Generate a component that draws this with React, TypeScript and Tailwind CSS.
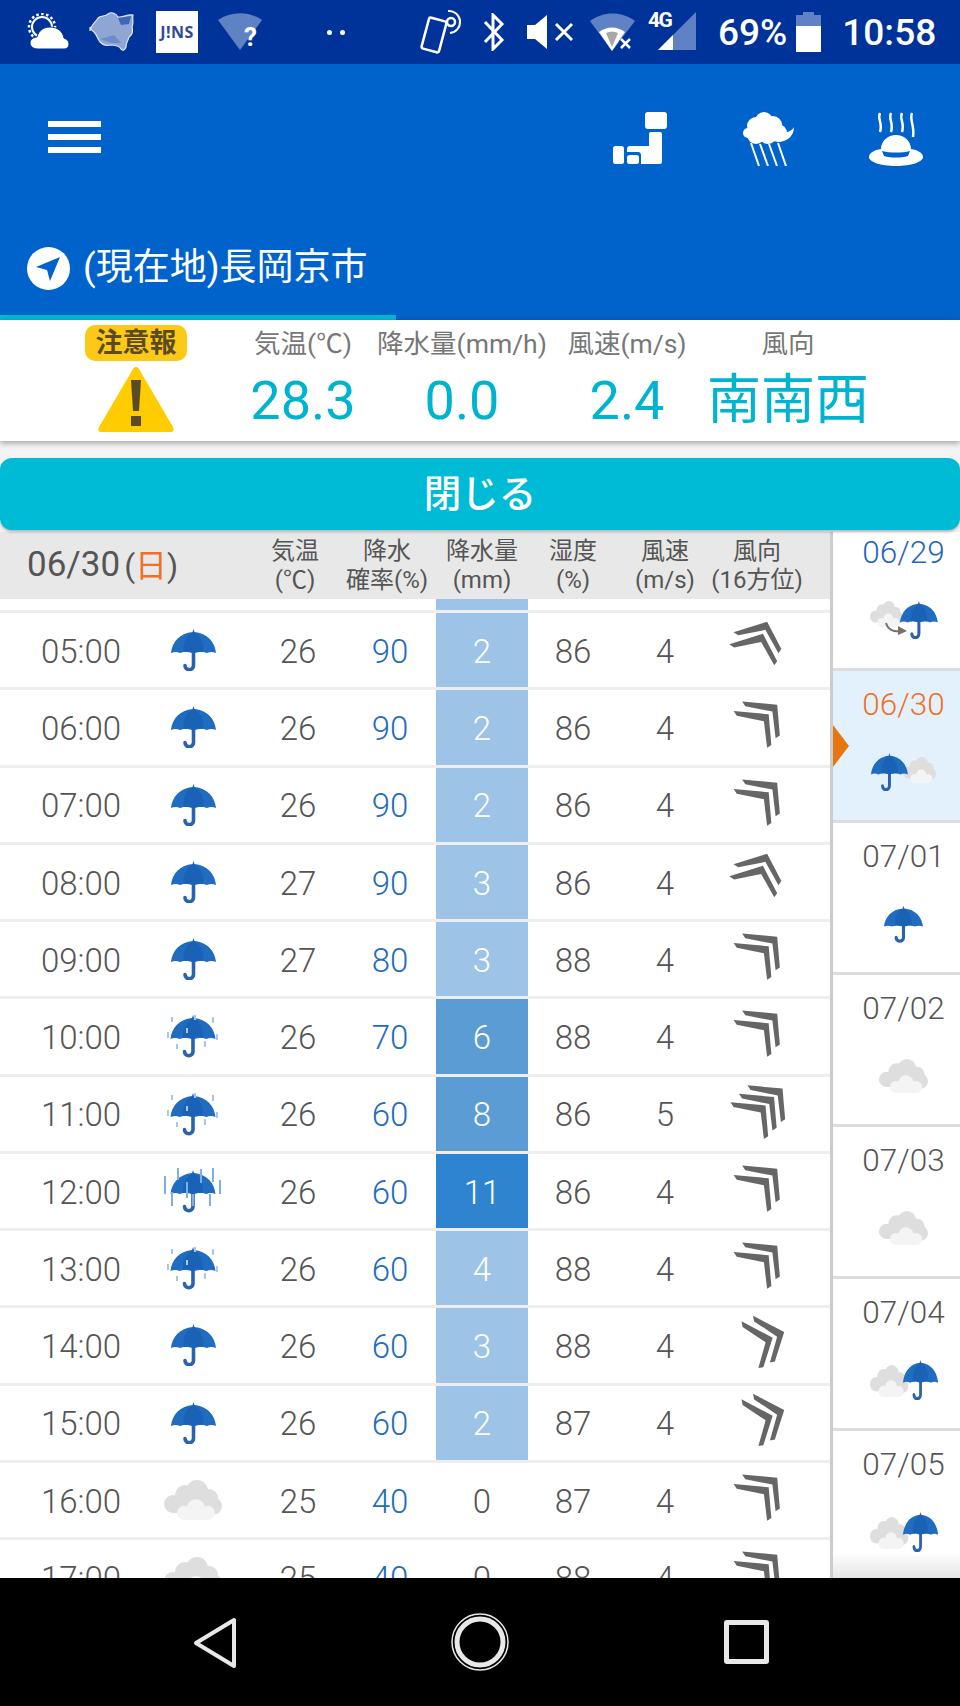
import React from "react";

const rows = [
  { time: "05:00", icon: "rain", temp: 26, prob: 90, mm: 2, hum: 86, spd: 4, rot: -22.5 },
  { time: "06:00", icon: "rain", temp: 26, prob: 90, mm: 2, hum: 86, spd: 4, rot: 0 },
  { time: "07:00", icon: "rain", temp: 26, prob: 90, mm: 2, hum: 86, spd: 4, rot: 0 },
  { time: "08:00", icon: "rain", temp: 27, prob: 90, mm: 3, hum: 86, spd: 4, rot: -22.5 },
  { time: "09:00", icon: "rain", temp: 27, prob: 80, mm: 3, hum: 88, spd: 4, rot: 0 },
  { time: "10:00", icon: "rain2", temp: 26, prob: 70, mm: 6, hum: 88, spd: 4, rot: 0 },
  { time: "11:00", icon: "rain2", temp: 26, prob: 60, mm: 8, hum: 86, spd: 5, rot: 0 },
  { time: "12:00", icon: "rain3", temp: 26, prob: 60, mm: 11, hum: 86, spd: 4, rot: 0 },
  { time: "13:00", icon: "rain2", temp: 26, prob: 60, mm: 4, hum: 88, spd: 4, rot: 0 },
  { time: "14:00", icon: "rain", temp: 26, prob: 60, mm: 3, hum: 88, spd: 4, rot: 22.5 },
  { time: "15:00", icon: "rain", temp: 26, prob: 60, mm: 2, hum: 87, spd: 4, rot: 22.5 },
  { time: "16:00", icon: "cloud", temp: 25, prob: 40, mm: 0, hum: 87, spd: 4, rot: 0 },
  { time: "17:00", icon: "cloud", temp: 25, prob: 40, mm: 0, hum: 88, spd: 4, rot: 0 },
];

const days = [
  { date: "06/29", kind: "cloudToRain", color: "text-[#1f66c0]", bg: "bg-white", h: "h-[139px]" },
  { date: "06/30", kind: "rainCloud", color: "text-[#f0702a]", bg: "bg-[#e3f1fc]", h: "h-[152px]" },
  { date: "07/01", kind: "rain", color: "text-[#555]", bg: "bg-white", h: "h-[152px]" },
  { date: "07/02", kind: "cloud", color: "text-[#555]", bg: "bg-white", h: "h-[152px]" },
  { date: "07/03", kind: "cloud", color: "text-[#555]", bg: "bg-white", h: "h-[152px]" },
  { date: "07/04", kind: "cloudRain", color: "text-[#555]", bg: "bg-white", h: "h-[152px]" },
  { date: "07/05", kind: "cloudRain", color: "text-[#555]", bg: "bg-white", h: "h-[152px]" },
];

// umbrella drawn in a 45x42 box
const UmbrellaShape = () => (
  <g>
    <path d="M22.5 22V36.5A4.2 4.2 0 0 1 14 36.5" fill="none" stroke="#2a62b0" strokeWidth="3.6" strokeLinecap="round" />
    <path d="M22.5 0l1 3C36 4 44 13 45 24c-3-1.500-6.500-1.500-9 0-3-1.500-7-1.500-13.500 0-6.500-1.500-10.500-1.500-13.500 0-2.500-1.500-6-1.500-9 0C1 13 9 4 21.500 3z" fill="#1f6cc0" />
    <path d="M22.500 3C15 6 12 15 12.500 22.500c3-.5 6-.5 10 1.500 4-2 7-2 10-1.500C33 15 30 6 22.500 3z" fill="#1a62b6" />
  </g>
);

// cloud drawn in a 58x40 box
const CloudShape = () => (
  <g>
    <g fill="#dedede">
      <circle cx="9" cy="24" r="9" />
      <circle cx="21" cy="15" r="10" />
      <circle cx="33" cy="11" r="11" />
      <circle cx="45" cy="18" r="9" />
      <circle cx="49" cy="26" r="9" />
      <rect x="9" y="18" width="38" height="15" />
    </g>
    <g fill="#f4f4f4">
      <circle cx="20" cy="33" r="7" />
      <circle cx="32" cy="28" r="9" />
      <circle cx="44" cy="33" r="7" />
      <rect x="20" y="30" width="24" height="10" />
    </g>
  </g>
);

const Umbrella = ({ w = 45, h = 42 }: { w?: number; h?: number }) => (
  <svg width={w} height={h} viewBox="0 0 45 42">
    <UmbrellaShape />
  </svg>
);

const Cloud = ({ w = 58, h = 40 }: { w?: number; h?: number }) => (
  <svg width={w} height={h} viewBox="0 0 58 40">
    <CloudShape />
  </svg>
);

const RainUmbrella = ({ heavy }: { heavy?: boolean }) => {
  const ticks = heavy
    ? [[2, 10, 18], [15, 2, 12], [38, 3, 14], [50, 2, 14], [57, 14, 14], [9, 26, 14], [24, 16, 16], [30, 28, 12], [47, 28, 12]]
    : [[9, 6, 5], [32, 4, 5], [50, 6, 6], [5, 21, 6], [54, 23, 6], [14, 33, 5], [24, 17, 5], [42, 30, 6]];
  return (
    <svg width="60" height="50" viewBox="0 0 60 50">
      <g transform="translate(7.500 4)">
        <UmbrellaShape />
      </g>
      {ticks.map(([x, y, l], i) => (
        <line key={i} x1={x} y1={y} x2={x} y2={y + l} stroke={heavy ? "#7fb0e2" : "#a9c8e6"} strokeWidth="2" />
      ))}
    </svg>
  );
};

const DayIcon = ({ kind }: { kind: string }) => {
  if (kind === "rain") return <Umbrella w={39} h={40} />;
  if (kind === "cloud") return <Cloud w={49} h={34} />;
  if (kind === "cloudToRain")
    return (
      <svg width="68" height="38" viewBox="0 0 68 38">
        <g transform="translate(0 0) scale(0.57 0.65)">
          <CloudShape />
        </g>
        <path d="M16 22c2 7 8 9 14 8" fill="none" stroke="#77716a" strokeWidth="2" />
        <path d="M28 25l9 5-9 4z" fill="#77716a" />
        <g transform="translate(30 0) scale(0.84 0.9)">
          <UmbrellaShape />
        </g>
      </svg>
    );
  if (kind === "rainCloud")
    return (
      <svg width="65" height="38" viewBox="0 0 65 38">
        <g transform="translate(32 4) scale(0.57 0.65)">
          <CloudShape />
        </g>
        <g transform="translate(0 0) scale(0.82 0.9)">
          <UmbrellaShape />
        </g>
      </svg>
    );
  return (
    <svg width="68" height="40" viewBox="0 0 68 40">
      <g transform="translate(0 5) scale(0.66 0.8)">
        <CloudShape />
      </g>
      <g transform="translate(33 0) scale(0.78 0.95)">
        <UmbrellaShape />
      </g>
    </svg>
  );
};

const chevron = "M-14-24L19-21 21.500 8 17.500 10.500 14.500-14.500-11-19.500Z";

const WindArrow = ({ rot, triple }: { rot: number; triple?: boolean }) => (
  <svg width="68" height="68" viewBox="-32 -32 64 64" className="shrink-0">
    <g transform={`rotate(${rot})`} fill="#666">
      {triple ? (
        <>
          <path d={chevron} transform="translate(5 -3)" />
          <path d={chevron} transform="translate(-3 5)" />
          <path d={chevron} transform="translate(-11 13)" />
        </>
      ) : (
        <>
          <path d={chevron} />
          <path d={chevron} transform="translate(-8 9)" />
        </>
      )}
    </g>
  </svg>
);

const rowIcon = (icon: string) => {
  if (icon === "rain") return <Umbrella />;
  if (icon === "rain2") return <RainUmbrella />;
  if (icon === "rain3") return <RainUmbrella heavy />;
  return <Cloud />;
};

const mmColor = (mm: number) => {
  if (mm >= 10) return "bg-[#2f84cf] text-white";
  if (mm >= 5) return "bg-[#5b9cd5] text-white";
  if (mm > 0) return "bg-[#9dc3e6] text-white";
  return "text-[#555]";
};

const StatusBar = () => (
  <div className="flex h-16 shrink-0 items-center bg-[#003399] pl-[27px] text-white">
    <svg width="42" height="38" viewBox="0 0 42 38">
      <circle cx="15" cy="14" r="10" fill="none" stroke="#fff" strokeWidth="2" />
      <circle cx="15" cy="14" r="13" fill="none" stroke="#fff" strokeWidth="2.500" strokeDasharray="2.500 2.500" />
      <path d="M11 36c-5 0-8-3-8-6s3-6 7-6c2-7 7-10 13-10 8 0 13 5 14 11 3 1 5 3 5 6 0 3-2 5-6 5z" fill="#fff" stroke="#003399" strokeWidth="1" />
    </svg>
    <svg width="46" height="40" viewBox="0 0 46 40" className="ml-[20px]">
      <path d="M1 19C2 13 7 10 9 6c3-3 7-1 10-4 4-3 8 0 10 3 4 1 9-3 15-2-1 4 1 8-1 12 1 4 0 8-3 10-1 4-3 5-3 10-1 3-3 4-5 2-2-4-7-4-11-4-4 1-7 0-10-3-3-4-3-7-6-10-2-1-3-3-4-5z" fill="#8fa5d4" stroke="#dfe6f5" strokeWidth="1.200" />
      <path d="M29 6l13-2-2 8-8 1z" fill="#3d66b6" />
      <path d="M11 27l14-4 7 8-10 0z" fill="#6f8cc8" />
    </svg>
    <div className="ml-[21px] flex h-[42px] w-[42px] items-center justify-center bg-white text-[16px] font-bold tracking-[0.5px] text-[#2c4a96] [font-family:'Open_Sans',sans-serif]">
      J!NS
    </div>
    <svg width="46" height="38" viewBox="0 0 46 38" className="ml-[20px]">
      <path d="M0 7C13-2 31-2 44 7L22 37z" fill="#5f82c4" />
      <text x="26" y="33" fontSize="26" fontWeight="700" fill="#fff" fontFamily="Roboto, sans-serif">?</text>
    </svg>
    <div className="ml-[63px] flex gap-[8px]">
      <span className="h-[5px] w-[5px] rounded-full bg-white" />
      <span className="h-[5px] w-[5px] rounded-full bg-white" />
    </div>
    <svg width="48" height="48" viewBox="0 0 48 48" className="ml-[73px]">
      <rect x="7" y="11" width="18" height="32" rx="2" transform="rotate(15 16 27)" fill="none" stroke="#fff" strokeWidth="2.500" />
      <circle cx="33" cy="14" r="4" fill="none" stroke="#fff" strokeWidth="2.500" />
      <path d="M30 3a11 11 0 1 1 2 22" fill="none" stroke="#fff" strokeWidth="2" />
    </svg>
    <svg width="24" height="38" viewBox="0 0 24 38" className="ml-[16px]">
      <path d="M3 9l17 18-9 9V2l9 9L3 29" fill="none" stroke="#fff" strokeWidth="3" />
    </svg>
    <svg width="48" height="36" viewBox="0 0 48 36" className="ml-[20px]">
      <path d="M1 11h8L21 1v34L9 25H1z" fill="#fff" />
      <path d="M30 10l16 16M46 10L30 26" stroke="#fff" strokeWidth="3" />
    </svg>
    <svg width="48" height="38" viewBox="0 0 48 38" className="ml-[15px]">
      <path d="M1 8C14-2 33-2 46 8L23 38z" fill="#5f82c4" />
      <path d="M10 19c8-6 18-6 26 0L23 38z" fill="#fff" />
      <path d="M17 20c4-2 8-2 12 0L23 34z" fill="#a7a7a7" />
      <path d="M32 26l9 9M41 26l-9 9" stroke="#003399" strokeWidth="6" />
      <path d="M32 26l9 9M41 26l-9 9" stroke="#fff" strokeWidth="2.500" />
    </svg>
    <div className="relative ml-[11px] h-[40px] w-[48px]">
      <svg width="48" height="38" viewBox="0 0 48 38" className="absolute left-0 top-0">
        <path d="M10 38L48 0v38z" fill="#5f82c4" />
        <path d="M10 38l15-15v15z" fill="#fff" />
      </svg>
      <span className="absolute left-0 top-[-3px] text-[21px] leading-[22px] font-bold tracking-[-1.5px] [font-family:Roboto,sans-serif]">4G</span>
    </div>
    <span className="ml-[22px] text-[37px] leading-none font-medium [font-family:Roboto,sans-serif]">69%</span>
    <svg width="25" height="40" viewBox="0 0 25 40" className="ml-[9px]">
      <path d="M7 0h11v3h7v11H0V3h7z" fill="#5f82c4" />
      <rect x="0" y="14" width="25" height="26" fill="#fff" />
    </svg>
    <span className="ml-[21px] text-[37px] leading-none font-medium [font-family:Roboto,sans-serif]">10:58</span>
  </div>
);

const AppBar = () => (
  <div className="flex h-64 shrink-0 flex-col bg-[#0063cc] text-white">
    <div className="flex h-[182px] items-start pt-[48px]">
      <div className="ml-[48px] mt-[9px] flex w-[53px] flex-col gap-[7px]">
        <span className="h-[6px] bg-white" />
        <span className="h-[6px] bg-white" />
        <span className="h-[6px] bg-white" />
      </div>
      <svg width="54" height="53" viewBox="0 0 54 53" className="ml-[512px]" fill="#fff">
        <rect x="0" y="34" width="11" height="18" rx="2.500" />
        <rect x="32" y="0" width="22" height="17" rx="3" />
        <rect x="14" y="43" width="12" height="9" rx="2.500" />
        <path d="M38 20h9a2 2 0 0 1 2 2v28a2 2 0 0 1-2 2H28V43a3 3 0 0 0-3-3H14v-3a3 3 0 0 1 3-3h19V22a2 2 0 0 1 2-2z" />
      </svg>
      <svg width="54" height="54" viewBox="0 0 54 54" className="ml-[75px]" fill="#fff">
        <circle cx="6" cy="21" r="5" />
        <circle cx="14" cy="14" r="9" />
        <circle cx="22" cy="9" r="9" />
        <circle cx="31" cy="13" r="9" />
        <circle cx="14" cy="23" r="9" />
        <circle cx="26" cy="23" r="9" />
        <circle cx="36" cy="21" r="9" />
        <path d="M40 20c5 1 10-1 12-5 0 9-7 15-17 15z" />
        <path d="M9 31l8 23M18 32l8 22M27 32l8 22M36 31l8 23" stroke="#fff" strokeWidth="2" fill="none" />
      </svg>
      <svg width="54" height="54" viewBox="0 0 54 54" className="ml-[73px]">
        <path d="M11 1c-3 6 3 10 0 19M22 1c-3 6 3 10 0 19M33 1c-3 6 3 10 0 19M43 1c-3 6 3 13 1 24" fill="none" stroke="#fff" strokeWidth="2.500" />
        <path d="M12 37c0-8 7-14 15-14s15 6 15 14c7 1 12 4 12 8 0 5-12 9-27 9S0 50 0 45c0-4 5-7 12-8z" fill="#fff" />
        <path d="M13 39c8 2 20 2 28 0l-2 5c-7 2-17 2-24 0z" fill="#0063cc" />
      </svg>
    </div>
    <div className="flex items-center pl-[27px]">
      <span className="flex h-[43px] w-[43px] items-center justify-center rounded-full bg-white">
        <svg width="30" height="30" viewBox="0 0 30 30">
          <path d="M26 4L2 14l11 3 3 11z" fill="#0063cc" />
        </svg>
      </span>
      <span className="ml-[13px] text-[37px] leading-[44px] [font-family:Roboto,'Noto_Sans_CJK_JP',sans-serif]">(現在地)長岡京市</span>
    </div>
    <div className="mt-auto h-[5px] w-[396px] bg-[#00bbd6]" />
  </div>
);

const InfoCol = ({ label, value, w }: { label: string; value: string; w: string }) => (
  <div className={`flex flex-col items-center ${w}`}>
    <span className="whitespace-nowrap text-[26.5px] leading-[36px] text-[#777]">{label}</span>
    <span className="mt-[6px] text-[54px] leading-[66px] text-[#00b4d0]">{value}</span>
  </div>
);

const InfoPanel = () => (
  <div className="z-10 flex h-[121px] shrink-0 bg-white shadow-[0_2px_6px_rgba(0,0,0,0.35)]">
    <div className="flex w-[235px] flex-col items-center pl-[37px] pt-[5px]">
      <span className="flex h-[36px] w-[102px] items-center justify-center rounded-[10px] bg-[#fbc916] text-[27px] font-bold text-[#5c4a24]">注意報</span>
      <svg width="76" height="66" viewBox="0 0 76 66" className="mt-[5px]">
        <path d="M38 1c1 0 2 .5 3 2l34 58c1.500 2.500.5 5-2 5H3c-2.500 0-3.500-2.500-2-5L35 3c1-1.500 2-2 3-2z" fill="#ffcc00" />
        <path d="M33 14h10l-2 31h-6z" fill="#5c4a24" />
        <rect x="33" y="50" width="10" height="10" fill="#5c4a24" />
      </svg>
    </div>
    <div className="flex pt-[6px]">
      <InfoCol label="気温(℃)" value="28.3" w="w-[136px]" />
      <InfoCol label="降水量(mm/h)" value="0.0" w="w-[182px]" />
      <InfoCol label="風速(m/s)" value="2.4" w="w-[148px]" />
      <InfoCol label="風向" value="南南西" w="w-[174px]" />
    </div>
  </div>
);

const HeadCell = ({ a, b, w }: { a: string; b: string; w: string }) => (
  <div className={`flex flex-col items-center text-[#555] ${w}`}>
    <span className="text-[24px] leading-[29px]">{a}</span>
    <span className="whitespace-nowrap text-[24px] leading-[29px]">{b}</span>
  </div>
);

const Table = () => (
  <div className="flex w-[833px] shrink-0 flex-col overflow-hidden border-r-[3px] border-[#ccc]">
    <div className="flex h-[67px] shrink-0 items-center bg-[#e8e8e8]">
      <div className="flex w-[252px] items-center pl-[27px] text-[#555]">
        <span className="text-[35px]">06/30</span>
        <span className="ml-[4px] text-[32px]">(<span className="text-[#f0702a]">日</span>)</span>
      </div>
      <HeadCell a="気温" b="(℃)" w="w-[86px]" />
      <HeadCell a="降水" b="確率(%)" w="w-[98px]" />
      <HeadCell a="降水量" b="(mm)" w="w-[92px]" />
      <HeadCell a="湿度" b="(%)" w="w-[90px]" />
      <HeadCell a="風速" b="(m/s)" w="w-[94px]" />
      <HeadCell a="風向" b="(16方位)" w="w-[90px]" />
    </div>
    <div className="flex h-[14px] shrink-0 border-b-[3px] border-[#eee]">
      <div className="ml-[436px] w-[92px] bg-[#9dc3e6]" />
    </div>
    {rows.map((r) => (
      <div
        key={r.time}
        className="flex h-[77.25px] shrink-0 border-b-[3px] border-[#eee] text-[33px] font-light text-[#555]"
      >
        <div className="flex w-[134px] items-center pl-[41px] pt-[3px]">{r.time}</div>
        <div className="flex w-[118px] items-center justify-center">{rowIcon(r.icon)}</div>
        <div className="flex w-[92px] items-center justify-center pt-[3px]">{r.temp}</div>
        <div className="flex w-[92px] items-center justify-center pt-[3px] text-[#1f6cc0]">{r.prob}</div>
        <div className={`flex w-[92px] items-center justify-center pt-[3px] ${mmColor(r.mm)}`}>{r.mm}</div>
        <div className="flex w-[90px] items-center justify-center pt-[3px]">{r.hum}</div>
        <div className="flex w-[94px] items-center justify-center pt-[3px]">{r.spd}</div>
        <div className="flex w-[90px] items-center justify-center">
          <WindArrow rot={r.rot} triple={r.spd === 5} />
        </div>
      </div>
    ))}
  </div>
);

const DayList = () => (
  <div className="relative flex min-w-0 flex-1 flex-col overflow-hidden">
    {days.map((d) => (
      <div
        key={d.date}
        className={`relative flex shrink-0 flex-col items-center justify-end border-b-[3px] border-[#ddd] pb-[26px] pl-[14px] ${d.bg} ${d.h}`}
      >
        <span className={`text-[31.5px] font-light leading-[40px] ${d.color}`}>{d.date}</span>
        <div className="mt-[25px] flex h-[44px] items-center justify-center">
          <DayIcon kind={d.kind} />
        </div>
        {d.date === "06/30" && (
          <span className="absolute left-0 top-[54px] h-0 w-0 border-y-[21px] border-l-[16px] border-y-transparent border-l-[#e8760e]" />
        )}
      </div>
    ))}
    <div className="absolute inset-x-0 bottom-0 h-[26px] bg-gradient-to-b from-transparent to-[#e6e6e6]" />
  </div>
);

const NavBar = () => (
  <div className="flex h-[128px] shrink-0 items-start bg-black pl-[193px] pt-[35px]">
    <svg width="44" height="52" viewBox="0 0 44 52" className="mt-[4px]">
      <path d="M41 3v46L3 26z" fill="none" stroke="#e8e8e8" strokeWidth="4" strokeLinejoin="round" />
    </svg>
    <svg width="58" height="58" viewBox="0 0 58 58" className="ml-[214px]">
      <circle cx="29" cy="29" r="28" fill="none" stroke="#e8e8e8" strokeWidth="1.500" />
      <circle cx="29" cy="29" r="23" fill="none" stroke="#e8e8e8" strokeWidth="5" />
    </svg>
    <div className="ml-[215px] mt-[7px] h-[44px] w-[45px] rounded-[3px] border-[5px] border-[#e8e8e8]" />
  </div>
);

export default function App() {
  return (
    <div className="flex h-[1706px] w-[960px] flex-col overflow-hidden bg-white [font-family:Roboto,'Noto_Sans_CJK_JP',sans-serif]">
      <StatusBar />
      <AppBar />
      <InfoPanel />
      <div className="flex h-[91px] shrink-0 items-start bg-[#f4f4f4] pt-[17px]">
        <button className="z-10 flex h-[72px] w-full items-center justify-center rounded-[12px] bg-[#00bbd6] text-[37.5px] font-medium text-white shadow-[0_2px_3px_rgba(0,0,0,0.25)]">
          閉じる
        </button>
      </div>
      <div className="flex min-h-0 flex-1 overflow-hidden">
        <Table />
        <DayList />
      </div>
      <NavBar />
    </div>
  );
}
